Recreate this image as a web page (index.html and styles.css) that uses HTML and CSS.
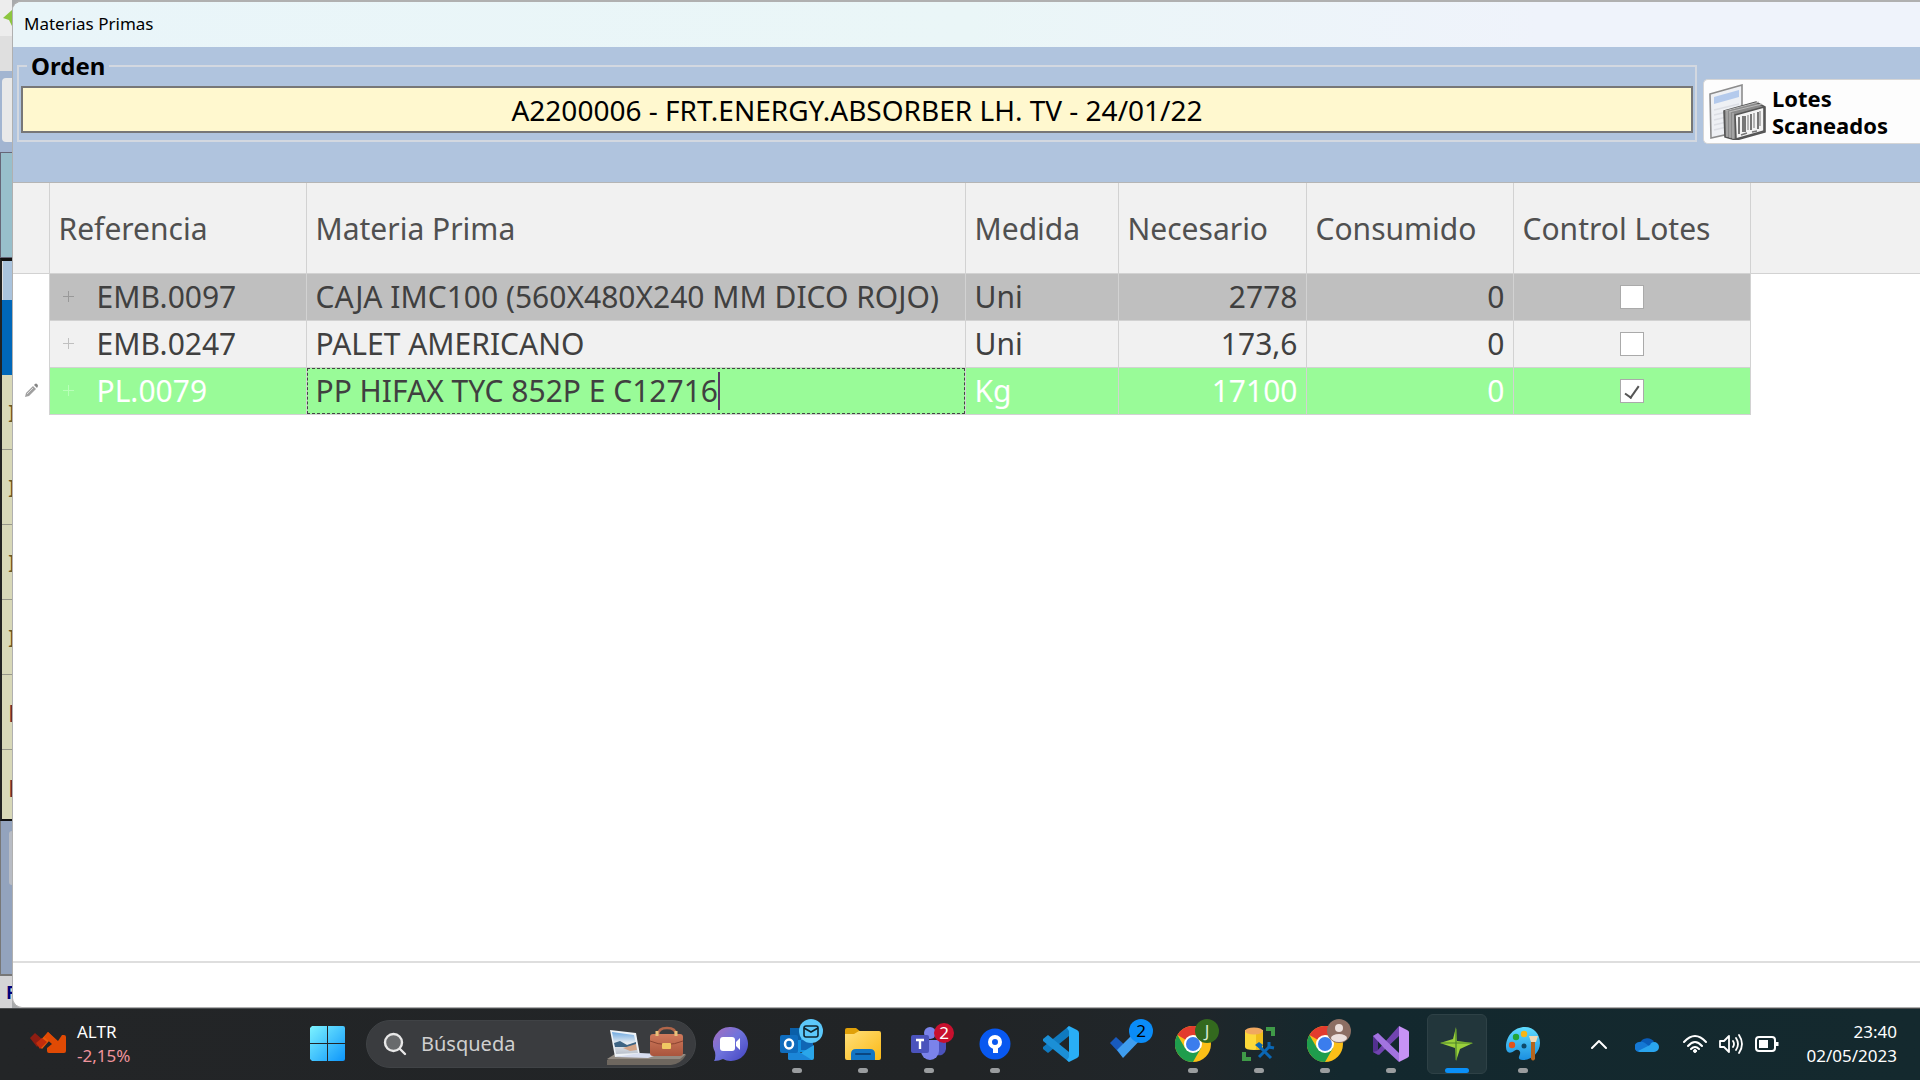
FILE: index.html
```html
<!DOCTYPE html>
<html lang="es">
<head>
<meta charset="utf-8">
<title>Materias Primas</title>
<link rel="stylesheet" href="styles.css">
</head>
<body>
<div class="desktop">
  <div class="backdrop" aria-hidden="true">
    <div class="back-title"><svg width="12" height="24" viewBox="0 0 12 24"><path d="M3 12 12 4v16l-3-6z" fill="#8cc63f"/></svg></div>
    <div class="back-menu"></div>
    <div class="back-tools"><span class="back-button"></span></div>
    <div class="back-panel"></div>
    <div class="back-list">
      <div class="back-head"></div>
      <div class="back-selected"></div>
      <div class="back-row">I</div>
      <div class="back-row">I</div>
      <div class="back-row">I</div>
      <div class="back-row">I</div>
      <div class="back-row red">P</div>
      <div class="back-row red">P</div>
    </div>
    <div class="back-footer"><span class="back-button small"></span></div>
    <div class="back-status">F</div>
  </div>

  <main class="window">
    <header class="titlebar"><h1>Materias Primas</h1></header>
    <section class="toolbar">
      <fieldset class="order">
        <legend><label for="orden">Orden</label></legend>
        <input id="orden" type="text" readonly value="A2200006 - FRT.ENERGY.ABSORBER LH. TV - 24/01/22">
      </fieldset>
      <button class="lots" type="button">
        <svg width="58" height="56" viewBox="0 0 58 56">
          <path d="M1 10 33 1v46L2 54z" fill="#eef0f4" stroke="#8c8c8c" stroke-width="1.6"/>
          <path d="M5 13 30 6v7L5 20z" fill="#b4caec"/>
          <path d="M5 26l25-6M5 31l25-6M5 36l25-6M5 41l25-6M5 46l25-6" stroke="#dcdee4" stroke-width="1.5"/>
          <path d="M15 27 47 18l9 5v25L27 56 16 53z" fill="#8a8a8a" stroke="#555" stroke-width="1.6"/>
          <path d="M18 27v26M21 28v26M24 29v26M16 27l34-9M20 28l33-8" stroke="#bcbcbc" stroke-width="1"/>
          <path d="M26 31 55 23v24L27 55z" fill="#f3f3f3" stroke="#555" stroke-width="1.6"/>
          <path d="M30 33v17M34 32v16M36 32v16M42 30v16M49 28v17" stroke="#777" stroke-width="2"/>
          <path d="M39 31v15M45 29v15M51 27v15" stroke="#777" stroke-width="1"/>
          <path d="M32 51l6-2M43 48l5-1" stroke="#777" stroke-width="1.4"/>
        </svg>
        <span>Lotes<br>Scaneados</span>
      </button>
    </section>

    <section class="grid">
      <table>
        <colgroup>
          <col class="c-mark"><col class="c-ref"><col class="c-mat"><col class="c-med"><col class="c-nec"><col class="c-con"><col class="c-lot"><col>
        </colgroup>
        <thead>
          <tr><th></th><th scope="col">Referencia</th><th scope="col">Materia Prima</th><th scope="col">Medida</th><th scope="col">Necesario</th><th scope="col">Consumido</th><th scope="col">Control Lotes</th><th class="rest"></th></tr>
        </thead>
        <tbody>
          <tr class="row-gray">
            <td class="mark"></td>
            <td><span class="ref"><button type="button" class="expand" aria-label="Expandir EMB.0097"></button>EMB.0097</span></td>
            <td>CAJA IMC100 (560X480X240 MM DICO ROJO)</td><td>Uni</td><td class="num">2778</td><td class="num">0</td>
            <td class="check"><input type="checkbox" aria-label="Control Lotes EMB.0097"></td><td class="rest"></td>
          </tr>
          <tr class="row-light">
            <td class="mark"></td>
            <td><span class="ref"><button type="button" class="expand" aria-label="Expandir EMB.0247"></button>EMB.0247</span></td>
            <td>PALET AMERICANO</td><td>Uni</td><td class="num">173,6</td><td class="num">0</td>
            <td class="check"><input type="checkbox" aria-label="Control Lotes EMB.0247"></td><td class="rest"></td>
          </tr>
          <tr class="row-green">
            <td class="mark"><svg width="16" height="16" viewBox="0 0 16 16"><path d="M2 14l1-4 7-7 3 3-7 7z" fill="#a0a0a0"/><path d="M11 2l1-1q1-1 2 0t1 2l-1 2z" fill="#858585"/><path d="M4 11l6-6" stroke="#ddd"/></svg></td>
            <td><span class="ref"><button type="button" class="expand" aria-label="Expandir PL.0079"></button>PL.0079</span></td>
            <td class="editing"><span class="editor"><input type="text" aria-label="Materia Prima" value="PP HIFAX TYC 852P E C12716"><i class="caret"></i></span></td><td>Kg</td><td class="num">17100</td><td class="num">0</td>
            <td class="check"><input type="checkbox" checked aria-label="Control Lotes PL.0079"></td><td class="rest"></td>
          </tr>
        </tbody>
      </table>
    </section>
    <footer class="window-footer"></footer>
  </main>
</div>

<nav class="taskbar">
  <button class="widget" type="button">
    <svg width="36" height="22" viewBox="0 0 36 22"><path d="M0 6 5 1l8 7-6 7z" fill="#8e1d12"/><path d="M7 12 18 0l9 9h-8l-7 8z" fill="#e85a0a"/><path d="M18 0l10 9 4-6h2q2 0 2 2v14q0 2-2 2H19q-2 0-2-2v-3l5-4-8-7z" fill="#e04a04"/><path d="M6 11l6-5 5 4-7 7z" fill="#c22d0c"/></svg>
    <span class="quote"><span>ALTR</span><span class="down">-2,15%</span></span>
  </button>
  <button class="app start" type="button" aria-label="Inicio">
    <svg width="36" height="36" viewBox="0 0 36 36"><defs><linearGradient id="win" x1="0" y1="0" x2="36" y2="36" gradientUnits="userSpaceOnUse"><stop offset="0" stop-color="#7df3ff"/><stop offset="1" stop-color="#0a93fb"/></linearGradient></defs><path d="M2 0h15v17H0V2zM18 0h15q2 0 2 2v15H18zM0 18h17v17H2l-2-2zM18 18h17v15q0 2-2 2H18z" fill="url(#win)"/></svg>
  </button>
  <div class="search">
    <svg width="24" height="24" viewBox="0 0 24 24" fill="none" stroke="#e8e8e8" stroke-width="2.4" stroke-linecap="round"><circle cx="10.500" cy="10.500" r="8.500" fill="#686a6c"/><path d="M17 17l5 5"/></svg>
    <input type="text" placeholder="Búsqueda" aria-label="Búsqueda">
    <svg class="search-art" width="80" height="40" viewBox="0 0 80 40">
      <defs><linearGradient id="sky" x1="0" y1="0" x2="0" y2="1"><stop offset="0" stop-color="#6fa9e0"/><stop offset=".5" stop-color="#e8edf2"/><stop offset="1" stop-color="#b9c0cb"/></linearGradient><linearGradient id="bag" x1="0" y1="0" x2="0" y2="1"><stop offset="0" stop-color="#d07a5c"/><stop offset="1" stop-color="#a9553d"/></linearGradient></defs>
      <path d="M0 34 8 29h71q-5 9-15 10H0z" fill="#6e675f"/><path d="M0 33 8 28h71l-6 5z" fill="#938b82"/>
      <path d="M3 4 29 7l4 22-25 2z" fill="#eef2f6"/><path d="M5 6 27 9l4 18-22 1z" fill="url(#sky)"/><path d="M7 17l6-2 7 4 9-3v5l-21 0z" fill="#3d6484"/><path d="M16 22l13-4 1 6-7 1z" fill="#d3a487"/>
      <path d="M8 31l25-4 20 1-12 4z" fill="#d8def0"/>
      <path d="M51 9q0-7 9-7t9 7" fill="none" stroke="#b1664a" stroke-width="2.500"/><rect x="43" y="8" width="33" height="22" rx="3" fill="url(#bag)"/><path d="M43 15q16 7 33 0" stroke="#8a4330" fill="none"/><rect x="55" y="17" width="9" height="6" rx="1" fill="#f0c863"/><path d="M50 5v5M69 5v5" stroke="#e9c27b" stroke-width="3"/>
    </svg>
  </div>

  <button class="app" type="button" aria-label="Chat">
    <svg width="36" height="36" viewBox="0 0 36 36"><defs><linearGradient id="meet" x1="4" y1="4" x2="30" y2="30" gradientUnits="userSpaceOnUse"><stop offset="0" stop-color="#9b6fc4"/><stop offset=".5" stop-color="#6f73dc"/><stop offset="1" stop-color="#4e50c8"/></linearGradient></defs><path d="M18 1a17 17 0 1 1-8 32q-4 2-9 2 2-3 1-9A17 17 0 0 1 18 1z" fill="url(#meet)"/><rect x="7" y="11" width="15" height="14" rx="3" fill="#fff"/><path d="M23 16l4-4v12l-4-4z" fill="#fff"/></svg>
  </button>
  <button class="app running" type="button" aria-label="Outlook">
    <svg width="36" height="36" viewBox="0 0 36 36"><rect x="11" y="2" width="23" height="24" rx="2" fill="#1490df"/><path d="M11 2h11v12H11z" fill="#0a5fa8"/><path d="M22 14h12v10H22z" fill="#1066b5"/><path d="M9 19l13 8 13-8v13q0 2-2 2H11q-2 0-2-2z" fill="#2aa6ea"/><path d="M9 19l24 15H11q-2 0-2-2z" fill="#1b86d8"/><rect x="1" y="9" width="18" height="18" rx="2" fill="#0f6cbd"/><ellipse cx="10" cy="18" rx="4" ry="4.500" fill="none" stroke="#fff" stroke-width="2.500"/></svg>
    <span class="badge mail"><svg width="24" height="24" viewBox="0 0 24 24"><rect x="5" y="7" width="14" height="11" rx="2" fill="none" stroke="#10242e" stroke-width="1.600"/><path d="M5 9l7 4 7-4" fill="none" stroke="#10242e" stroke-width="1.600"/></svg></span>
  </button>
  <button class="app running" type="button" aria-label="Explorador de archivos">
    <svg width="36" height="36" viewBox="0 0 36 36"><defs><linearGradient id="fold" x1="0" y1="0" x2="1" y2="1"><stop offset="0" stop-color="#ffe07a"/><stop offset="1" stop-color="#fbb917"/></linearGradient></defs><path d="M0 4q0-2 2-2h9l5 4-2 4H0z" fill="#e0a008"/><path d="M0 8h9l5-3h20q2 0 2 2v25q0 2-2 2H2q-2 0-2-2z" fill="url(#fold)"/><path d="M6 34v-6q0-5 5-5h14q5 0 5 5v6z" fill="#1275c4"/><path d="M11 28h14" stroke="#0a4680" stroke-width="2" stroke-linecap="round"/></svg>
  </button>
  <button class="app running" type="button" aria-label="Teams">
    <svg width="36" height="36" viewBox="0 0 36 36"><circle cx="19" cy="7" r="6" fill="#7b83eb"/><path d="M24 14h11v9a7 7 0 0 1-9 6z" fill="#4b53bc"/><path d="M10 14h18v11a9 9 0 0 1-18 0z" fill="#7b83eb"/><rect x="0" y="9" width="18" height="18" rx="2" fill="#4b53bc"/><path d="M5 14h8M9 14v9" stroke="#fff" stroke-width="2.400"/></svg>
    <span class="badge alert">2</span>
  </button>
  <button class="app running" type="button" aria-label="Sourcetree">
    <svg width="36" height="36" viewBox="0 0 36 36"><circle cx="18" cy="18" r="15.500" fill="#0858f0"/><circle cx="18" cy="16" r="5" fill="none" stroke="#fff" stroke-width="4"/><path d="M14 20h4l3-1v8h-5v-6z" fill="#fff"/></svg>
  </button>
  <button class="app" type="button" aria-label="Visual Studio Code">
    <svg width="36" height="36" viewBox="0 0 36 36"><path d="M26 0v10L5 27l-5-4v-2z" fill="#0f7ac0"/><path d="M0 13l5-4 21 17v10L0 15z" fill="#1b8fd6"/><path d="M26 0l8 4q2 1 2 3v22q0 2-2 3l-8 4-2-2 2-3V5l-2-3z" fill="#29aef5"/></svg>
  </button>
  <button class="app" type="button" aria-label="To Do">
    <svg width="36" height="36" viewBox="0 0 36 36"><path d="M1 17l6-6 13 12-6 8z" fill="#185abd"/><path d="M14 32l-6-8L29 3l6 7z" fill="#3f9dee"/></svg>
    <span class="badge count">2</span>
  </button>
  <button class="app running" type="button" aria-label="Chrome, perfil J">
    <svg width="36" height="36" viewBox="0 0 36 36"><circle cx="18" cy="18" r="18" fill="#fbbf17"/><path d="M18 18 2.400 9A18 18 0 0 1 33.600 9H18z" fill="#e33b2e"/><path d="M2.400 9A18 18 0 0 0 18 36l8-14-8-4-8 4z" fill="#1f9d4d"/><circle cx="18" cy="18" r="9" fill="#fff"/><circle cx="18" cy="18" r="7" fill="#3b7ded"/></svg>
    <span class="badge profile">J</span>
  </button>
  <button class="app running" type="button" aria-label="SQL Server Management Studio">
    <svg width="36" height="36" viewBox="0 0 36 36"><path d="M4 4v17q0 3 9 3t9-3V4z" fill="#fcd93a"/><path d="M15 5h7v16q0 2-7 3z" fill="#efbd1b"/><ellipse cx="13" cy="5" rx="9" ry="3.500" fill="#f0a860"/><path d="M25 3h7v7M3 26v7h7" fill="none" stroke="#3f9a48" stroke-width="4"/><path d="M14 19l4-3 4 3-3 4z" fill="#0a67b5"/><path d="M18 20l12 12M29 20 18 31" stroke="#0a67b5" stroke-width="3"/><path d="M28 16v5l5 1" fill="none" stroke="#0a67b5" stroke-width="3"/></svg>
  </button>
  <button class="app running" type="button" aria-label="Chrome">
    <svg width="36" height="36" viewBox="0 0 36 36"><circle cx="18" cy="18" r="18" fill="#fbbf17"/><path d="M18 18 2.400 9A18 18 0 0 1 33.600 9H18z" fill="#e33b2e"/><path d="M2.400 9A18 18 0 0 0 18 36l8-14-8-4-8 4z" fill="#1f9d4d"/><circle cx="18" cy="18" r="9" fill="#fff"/><circle cx="18" cy="18" r="7" fill="#3b7ded"/></svg>
    <span class="badge person"><svg width="24" height="24" viewBox="0 0 24 24"><circle cx="12" cy="9" r="4" fill="#ecdfdc"/><ellipse cx="12" cy="19" rx="8" ry="4" fill="#ecdfdc"/></svg></span>
  </button>
  <button class="app running" type="button" aria-label="Visual Studio">
    <svg width="36" height="36" viewBox="0 0 36 36"><path d="M0 10l5-3v22l-5-3z" fill="#52308f"/><path d="M26 0v10L6 29l-6-3 4-1z" fill="#7144b0"/><path d="M0 10l5-3 21 20v9L12 23z" fill="#a273e0"/><path d="M26 0l8 4q2 1 2 2v24q0 1-2 2l-8 4z" fill="#c792f5"/></svg>
  </button>
  <button class="app running active" type="button" aria-label="Materias Primas">
    <svg width="36" height="36" viewBox="0 0 36 36"><path d="M17 1l1 14 16 2-13 6-4 12-1-13-15-5 13-4z" fill="#9ad03c"/><path d="M17 3v31M2 17h31" stroke="#4f8428" stroke-width="1.200"/></svg>
  </button>
  <button class="app running" type="button" aria-label="Paint">
    <svg width="36" height="36" viewBox="0 0 36 36"><defs><linearGradient id="pal" x1="0" y1="0" x2="0" y2="1"><stop offset="0" stop-color="#5fdcff"/><stop offset="1" stop-color="#1b8fe0"/></linearGradient></defs><path d="M20 1c9 0 15 7 15 16s-8 17-17 17c-6 0-4-3-3-6s-2-6-6-3-8 2-8-4C1 10 9 1 20 1z" fill="url(#pal)"/><circle cx="11" cy="11" r="3.200" fill="#22a535"/><circle cx="19" cy="8" r="3.200" fill="#f8b615"/><circle cx="7" cy="19" r="3.200" fill="#e2531d"/><circle cx="19" cy="20" r="2.500" fill="#0e4a6b"/><path d="M26 16h4v17q-2 3-4 0z" fill="#b5651d"/><path d="M24 10h9l-2 6h-5z" fill="#f2d9b4"/></svg>
  </button>

  <div class="tray">
    <button type="button" class="tray-icon chevron" aria-label="Mostrar iconos ocultos"><svg width="16" height="24" viewBox="0 0 16 24" fill="none" stroke="#fff" stroke-width="2" stroke-linecap="round" stroke-linejoin="round"><path d="M1 16l7-7 7 7"/></svg></button>
    <button type="button" class="tray-icon cloud" aria-label="OneDrive"><svg width="24" height="24" viewBox="0 0 24 24"><path d="M5 11a8 8 0 0 1 14-1l-5 6-10-1z" fill="#0a5cb8"/><path d="M5 20a5 5 0 0 1-1-10q3-1 6 1l8 6-5 3z" fill="#1478d4"/><path d="M3 19 15 13q1-3 4-3a5 5 0 0 1 0 10H5z" fill="#2aa5ee"/></svg></button>
    <button type="button" class="tray-icon" aria-label="Red, volumen y batería">
      <svg width="24" height="24" viewBox="0 0 24 24" fill="none" stroke="#fff" stroke-width="2" stroke-linecap="round"><path d="M1 10q11-12 22 0M5 14q7-8 14 0M8 17q4-4 8 0"/><circle cx="12" cy="19" r="1.500" fill="#fff" stroke-width="1"/></svg>
      <svg width="24" height="24" viewBox="0 0 24 24" fill="none" stroke="#fff" stroke-width="1.800" stroke-linecap="round" stroke-linejoin="round"><path d="M1 9h4l5-5v16l-5-5H1zM14 9q2 3 0 6M17 6q4 6 0 12M20 3q6 9 0 18"/></svg>
      <svg width="24" height="24" viewBox="0 0 24 24" fill="none" stroke="#fff" stroke-width="2"><rect x="1" y="5" width="19" height="14" rx="3"/><rect x="4" y="8" width="9" height="8" fill="#fff" stroke="none"/><path d="M22 10v4" stroke-width="3"/></svg>
    </button>
    <div class="clock"><time>23:40</time><time>02/05/2023</time></div>
  </div>
</nav>
</body>
</html>
```

FILE: styles.css
```css
* { box-sizing: border-box; }

body {
  margin: 0;
  height: 100vh;
  overflow: hidden;
  display: flex;
  flex-direction: column;
  font-family: "Noto Sans", "Open Sans", sans-serif;
  color: #000;
}

button, input { font: inherit; color: inherit; }
button { border: 0; padding: 0; background: none; }
svg { display: block; flex: none; }

.desktop {
  flex: 1;
  min-height: 0;
  display: flex;
  background: #a8aaac;
}

/* Window behind the dialog */
.backdrop {
  width: 12px;
  flex: none;
  display: flex;
  flex-direction: column;
  overflow: hidden;
}
.backdrop > *, .back-list > * { flex: none; overflow: hidden; }
.back-title { height: 36px; padding-top: 6px; background: #ededed; }
.back-menu { height: 35px; background: #dfdfdf; }
.back-tools { height: 81px; padding: 7px 0 0 2px; background: #a2b5d1; }
.back-button {
  display: block;
  height: 64px;
  background: #e9e9e9;
  border-radius: 4px 0 0 4px;
}
.back-button.small { height: 54px; margin-left: 8px; background: #b8bcc4; }
.back-panel { height: 106px; background: #98bfcb; border: 1px solid #667; border-right: 0; }
.back-list {
  height: 563px;
  border-top: 3px solid #111;
  border-bottom: 2px solid #111;
  border-left: 2px solid #222;
}
.back-head { height: 39px; background: #a9c3dd; border-left: 1px solid #ddd; }
.back-selected { height: 75px; background: #0067b9; }
.back-row {
  height: 75px;
  padding-left: 6px;
  background: #d8d8b8;
  border-bottom: 1px solid #98988a;
  font-size: 24px;
  line-height: 75px;
  color: #6a5622;
}
.back-row.red { color: #6b2a2a; }
.back-row:last-child { height: 69px; border: 0; }
.back-footer { height: 155px; padding-top: 10px; background: #93a3bd; border-left: 1px solid #777; border-bottom: 2px solid #777; }
.back-status { height: 32px; padding-left: 6px; background: #d4d4d6; color: #00007a; font-weight: 700; font-size: 18px; line-height: 32px; }

/* Dialog */
.window {
  flex: 1;
  min-width: 0;
  display: flex;
  flex-direction: column;
  border-top: 2px solid #b0b0b0;
  border-left: 1px solid #b0b0b0;
  border-bottom: 1px solid #b0b0b0;
  border-radius: 10px 0 0 10px;
  overflow: hidden;
  background: #fff;
}
.titlebar {
  height: 45px;
  flex: none;
  padding: 0 11px;
  background: linear-gradient(90deg, #e9f5f9, #eaf6f7 50%, #eff3fb 80%);
}
.titlebar h1 { margin: 0; font-size: 17px; line-height: 43px; font-weight: 400; }

.toolbar {
  height: 135px;
  flex: none;
  display: flex;
  align-items: flex-start;
  gap: 6px;
  padding: 3px 0 0 4px;
  background: #b0c4de;
}
.order {
  flex: 1;
  min-width: 0;
  margin: 0;
  padding: 4px 2px 7px;
  border: 2px solid #d3d8e0;
  font-size: 28px;
}
.order legend {
  margin-left: 6px;
  padding: 0 4px;
  font-size: 24px;
  line-height: 32px;
  font-weight: 700;
}
.order input {
  display: block;
  width: 100%;
  height: 47px;
  padding: 0;
  border: 2px solid #777;
  background: #fff8cf;
  text-align: center;
}
.lots {
  width: 217px;
  height: 65px;
  flex: none;
  display: flex;
  align-items: center;
  gap: 5px;
  margin-top: 29px;
  padding-left: 5px;
  border: 1px solid #d5d5d5;
  border-right: 0;
  border-radius: 5px 0 0 5px;
  background: #fdfdfd;
  font-size: 22px;
  line-height: 27px;
  font-weight: 700;
  text-align: left;
}

/* Data grid */
.grid { flex: 1; min-height: 0; border-top: 1px solid #b5b5b5; }
table {
  width: 100%;
  table-layout: fixed;
  border-collapse: collapse;
  font-size: 30px;
  line-height: 40px;
}
.c-mark { width: 36px; }
.c-ref { width: 257px; }
.c-mat { width: 659px; }
.c-med { width: 153px; }
.c-nec { width: 188px; }
.c-con { width: 207px; }
.c-lot { width: 237px; }
th {
  height: 90px;
  padding: 2px 9px 0;
  background: #f1f1f1;
  border: 1px solid #d2d2d2;
  border-top: 0;
  color: #505050;
  font-weight: 400;
  text-align: left;
}
th:first-child { border-left: 0; }
th.rest { border-right: 0; }
td {
  height: 47px;
  padding: 0 9px;
  border: 1px solid #d2d2d2;
  color: #404040;
  white-space: nowrap;
}
.row-gray td { background: #bfbfbf; }
.row-light td { background: #f1f1f1; }
.row-green td { background: #99fb98; color: #fff; }
tr td.mark, tr td.rest { background: #fff; border: 0; padding: 0; }
td.mark svg { margin: 0 auto; }
.num { text-align: right; padding-right: 8px; }
.ref { display: flex; align-items: center; gap: 19px; }
.expand { width: 19px; height: 12px; flex: none; position: relative; }
.expand::before, .expand::after { content: ""; position: absolute; background: #999; }
.expand::before { left: 4px; top: 5px; width: 11px; height: 1px; }
.expand::after { left: 9px; top: 0; width: 1px; height: 11px; }
.row-light .expand::before, .row-light .expand::after { background: #c0c0c0; }
.row-green .expand::before, .row-green .expand::after { background: #b8ffb8; }
.row-green td.editing { padding: 0; color: #404040; }
.editor {
  display: flex;
  align-items: center;
  height: 46px;
  padding-left: 8px;
  border: 1px dashed #444;
}
.editor input {
  field-sizing: content;
  padding: 0;
  border: 0;
  outline: 0;
  background: none;
}
.caret { width: 2px; height: 38px; background: #5a3a66; }
.check input {
  appearance: none;
  display: grid;
  place-items: center;
  width: 24px;
  height: 24px;
  margin: 0 auto;
  border: 1px solid #aaa;
  background: #fff;
}
.check input:checked::before {
  content: "";
  width: 6px;
  height: 13px;
  border: solid #555;
  border-width: 0 2px 2px 0;
  transform: rotate(35deg);
}
.window-footer { height: 46px; flex: none; border-top: 2px solid #dedede; }

/* Taskbar */
.taskbar {
  height: 72px;
  flex: none;
  display: flex;
  align-items: center;
  padding-bottom: 1px;
  border-top: 1px solid #4a4d4f;
  background: linear-gradient(90deg, #232527, #212426 50%, #20262a 62%, #13282e 70%, #14292e);
  color: #fff;
  font-size: 17px;
  line-height: 24px;
}
.widget {
  width: 295px;
  flex: none;
  display: flex;
  align-items: center;
  gap: 11px;
  padding-left: 30px;
  text-align: left;
}
.widget svg { margin-bottom: 2px; }
.quote { display: flex; flex-direction: column; }
.down { color: #f0949c; }
.search {
  width: 330px;
  height: 48px;
  flex: none;
  display: flex;
  align-items: center;
  margin: 0 2px 0 5px;
  padding: 0 8px 0 16px;
  border: 1px solid #404346;
  border-radius: 24px;
  background: #3a3c3f;
}
.search input {
  flex: 1;
  min-width: 0;
  padding: 0 0 0 14px;
  border: 0;
  background: none;
  font-size: 20px;
}
.search input::placeholder { color: #d0d0d0; opacity: 1; }
.search-art { margin-top: 3px; }
.app {
  position: relative;
  width: 60px;
  height: 60px;
  flex: none;
  margin: 0 3px;
  display: grid;
  place-items: center;
  border: 1px solid transparent;
  border-radius: 6px;
}
.running::after {
  content: "";
  position: absolute;
  left: 50%;
  bottom: 0;
  width: 10px;
  height: 5px;
  margin-left: -5px;
  border-radius: 3px;
  background: #9a9d9f;
}
.active { background: #22363b; border-color: #2e4146; }
.active::after { width: 24px; margin-left: -12px; background: #0a90f8; }
.badge {
  position: absolute;
  top: 4px;
  right: 3px;
  width: 24px;
  height: 24px;
  border-radius: 50%;
  font-size: 17px;
  line-height: 24px;
  text-align: center;
}
.mail { background: #5cc8fb; }
.alert { top: 8px; right: 4px; width: 20px; height: 20px; line-height: 20px; background: #c8102e; }
.count { background: #0a8cf8; color: #000; }
.profile { background: #33691e; color: #d8e8d0; }
.person { background: #8d6e63; }

.tray {
  margin-left: auto;
  display: flex;
  align-items: center;
  padding-right: 23px;
}
.tray-icon { display: flex; align-items: center; gap: 12px; }
.chevron { margin-right: 28px; }
.cloud { margin-right: 24px; }
.clock {
  width: 118px;
  display: flex;
  flex-direction: column;
  text-align: right;
}
```
